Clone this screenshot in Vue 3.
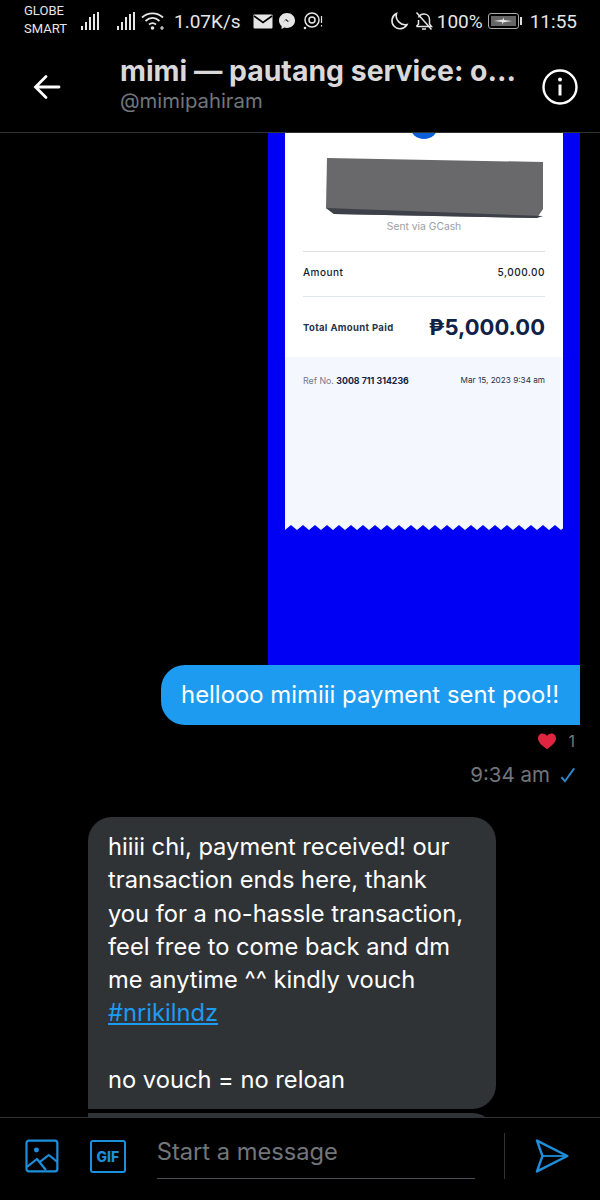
<template>
  <div class="screen">
    <div class="top">
      <div class="status">
        <div class="carrier">GLOBE<br>SMART</div>
        <svg class="bars" width="20" height="20" viewBox="0 0 20 20">
          <rect v-for="b in bars" :key="b.x" :x="b.x" :y="b.y" width="2" :height="19 - b.y" fill="#e6e6e6" />
        </svg>
        <svg class="bars second" width="20" height="20" viewBox="0 0 20 20">
          <rect v-for="b in bars" :key="b.x" :x="b.x" :y="b.y" width="2" :height="19 - b.y" fill="#e6e6e6" />
        </svg>
        <svg class="wifi" width="24" height="20" viewBox="0 0 24 20" fill="none" stroke="#e6e6e6" stroke-width="1.7">
          <path d="M1 6.500C7 1 16 1 22 6.500" />
          <path d="M4.500 10C9 6 14 6 18.500 10" />
          <path d="M8 13.500C10 11.800 13 11.800 15 13.500" />
          <circle cx="11.500" cy="17" r="1.800" fill="#e6e6e6" stroke="none" />
          <path d="M19 17h4M21 15v4" stroke-width="1.200" />
        </svg>
        <span class="speed">1.07K/s</span>
        <svg class="mail" width="20" height="15" viewBox="0 0 20 15">
          <rect width="19" height="14" x="0.500" y="0.500" fill="#e6e6e6" rx="1" />
          <path d="M1 2l9 6.500L19 2" fill="none" stroke="#000" stroke-width="1.600" />
        </svg>
        <svg class="messenger" width="18" height="18" viewBox="0 0 18 18">
          <path d="M9 1C4.500 1 1 4.200 1 8.500c0 2.300 1 4.200 2.600 5.500v3l2.700-1.500c.8.300 1.700.4 2.700.4 4.500 0 8-3.200 8-7.400S13.500 1 9 1z" fill="#e6e6e6" />
          <path d="M4.500 11L8 7l2.500 2.200L13.500 6 10 10 7.500 8z" fill="#000" />
        </svg>
        <svg class="ring" width="20" height="20" viewBox="0 0 20 20" fill="none" stroke="#e6e6e6">
          <circle cx="9" cy="9" r="7" stroke-width="1.500" />
          <circle cx="9" cy="9" r="3" stroke-width="1.500" />
          <circle cx="2" cy="17" r="1.300" fill="#e6e6e6" stroke="none" />
          <path d="M18.500 5v7M18.500 14v1.500" stroke-width="1.200" />
        </svg>
        <div class="status-right">
          <svg width="20" height="20" viewBox="0 0 20 20" fill="none" stroke="#e6e6e6" stroke-width="1.600">
            <path d="M7.500 2.500A8 8 0 1 0 18 13.500 9 9 0 0 1 7.500 2.500z" />
          </svg>
          <svg class="mute" width="18" height="20" viewBox="0 0 18 20" fill="none" stroke="#e6e6e6" stroke-width="1.500">
            <path d="M1.500 15.500h15l-2-2.500V8.500C14.500 5 12 3 9 3S4.500 4 3.500 6.500" />
            <path d="M3.500 9v4l-2 2.500M7 18h4M1.500 1.500l15 17" />
          </svg>
          <span class="pct">100%</span>
          <div class="battery">
            <div class="charge">
              <svg width="20" height="8" viewBox="0 0 20 8"><path d="M1 4l9-1.500L11 0v3l8 1-9 1.500L9 8V5z" fill="#e6e6e6" /></svg>
            </div>
          </div>
          <div class="nub"></div>
          <span class="clock">11:55</span>
        </div>
      </div>
      <div class="header">
        <svg class="back" width="28" height="28" viewBox="0 0 28 28" fill="none" stroke="#fff" stroke-width="2.800" stroke-linecap="round">
          <path d="M26 14H3M13 3.500L2.500 14 13 24.500" />
        </svg>
        <div class="names">
          <div class="name">mimi — pautang service: o...</div>
          <div class="handle">@mimipahiram</div>
        </div>
        <svg class="info" width="36" height="36" viewBox="0 0 36 36" fill="none" stroke="#fff">
          <circle cx="18" cy="18" r="16.500" stroke-width="2.400" />
          <circle cx="18" cy="10.500" r="2" fill="#fff" stroke="none" />
          <path d="M18 15.500v11" stroke-width="3" />
        </svg>
      </div>
    </div>

    <div class="chat">
      <div class="photo">
        <div class="receipt">
          <div class="dot"></div>
          <div class="card">
            <svg class="redact" width="218" height="62" viewBox="0 0 218 62">
              <path d="M1 1L217 5V52L211 61L8 57L0 51z" fill="#69696b" />
              <path d="M0 51L217 59L211 61L8 57z" fill="#3d4048" />
            </svg>
            <div class="via">Sent via GCash</div>
            <div class="amount-row">
              <span>Amount</span>
              <span>5,000.00</span>
            </div>
            <div class="total-row">
              <span class="total-label">Total Amount Paid</span>
              <span class="total">₱5,000.00</span>
            </div>
          </div>
          <div class="foot">
            <span class="ref">Ref No. <b>3008 711 314236</b></span>
            <span class="date">Mar 15, 2023 9:34 am</span>
          </div>
          <svg class="zigzag" width="278" height="5" viewBox="0 0 278 5">
            <defs>
              <pattern id="teeth" width="12" height="5" patternUnits="userSpaceOnUse">
                <path d="M0 0H12V5L6 0L0 5z" fill="#f4f8fe" />
              </pattern>
            </defs>
            <rect width="278" height="5" fill="url(#teeth)" />
          </svg>
        </div>
      </div>
      <div class="sent">hellooo mimiii payment sent poo!!</div>
      <div class="react">
        <svg width="18" height="17" viewBox="0 0 20 18">
          <path d="M10 17.500C3 12.500 0 9 0 5.300 0 2.300 2.300 0 5.200 0 7.200 0 9 1 10 2.800 11 1 12.800 0 14.800 0 17.700 0 20 2.300 20 5.300 20 9 17 12.500 10 17.500z" fill="#e2253f" />
        </svg>
        <span>1</span>
      </div>
      <div class="meta">
        <span>9:34 am</span>
        <svg width="18" height="18" viewBox="0 0 18 18" fill="none" stroke="#2b88c9" stroke-width="2.200">
          <path d="M1.500 11.500L5.500 16 16 1.500" />
        </svg>
      </div>
      <div class="bubble">hiiii chi, payment received! our transaction ends here, thank you for a no-hassle transaction, feel free to come back and dm me anytime ^^ kindly vouch <a class="tag">#nrikilndz</a><br><br>no vouch = no reloan</div>
      <div class="bubble next"></div>
    </div>

    <div class="composer">
      <svg width="34" height="34" viewBox="0 0 34 34" fill="none" stroke="#1d8fdc" stroke-width="2.200" stroke-linejoin="round">
        <rect x="1.500" y="1.500" width="31" height="31" rx="2.500" />
        <circle cx="11.500" cy="11" r="2.500" fill="#1d8fdc" stroke="none" />
        <path d="M2 28l10-8 9 11M15 23l9-7 8.500 7" />
      </svg>
      <div class="gif"><span>GIF</span></div>
      <div class="input">Start a message</div>
      <div class="rule"></div>
      <svg width="34" height="34" viewBox="0 0 34 34" fill="none" stroke="#1d8fdc" stroke-width="2.400" stroke-linejoin="round">
        <path d="M2 1.500L32.500 17 2 32.500 7.500 17z" />
        <path d="M7.500 17H32" stroke-width="1.800" />
      </svg>
    </div>
  </div>
</template>

<script setup>
// five signal bars rising left to right
const bars = [
  { x: 1, y: 15 },
  { x: 5, y: 11 },
  { x: 9, y: 6 },
  { x: 13, y: 3 },
  { x: 17, y: 1 },
]
</script>

<style scoped>
.screen {
  display: flex;
  flex-direction: column;
  width: 600px;
  height: 1200px;
  overflow: hidden;
  background: #000;
  font-family: Inter, "Liberation Sans", sans-serif;
}

.top {
  flex: none;
  height: 133px;
  border-bottom: 1px solid #2f3336;
  box-sizing: border-box;
}

.status {
  display: flex;
  align-items: center;
  height: 42px;
  padding: 0 23px 0 24px;
  color: #e6e6e6;
  font-family: Roboto, "Liberation Sans", sans-serif;
}

.carrier {
  width: 56px;
  font-size: 13px;
  line-height: 18px;
  margin-top: -2px;
}

.bars.second {
  margin-left: 16px;
}

.wifi {
  margin-left: 5px;
}

.speed {
  margin-left: 9px;
  font-size: 19px;
}

.mail {
  margin-left: 12px;
}

.messenger {
  margin-left: 5px;
}

.ring {
  margin-left: 7px;
}

.status-right {
  display: flex;
  align-items: center;
  margin-left: auto;
}

.mute {
  margin-left: 6px;
}

.pct {
  margin-left: 4px;
  font-size: 19px;
}

.battery {
  width: 31px;
  height: 16px;
  margin-left: 5px;
  padding: 2px;
  border: 1px solid #aaa;
  border-radius: 3px;
  box-sizing: border-box;
}

.charge {
  display: flex;
  align-items: center;
  justify-content: center;
  height: 100%;
  background: #666;
}

.nub {
  width: 2px;
  height: 8px;
  margin-left: 1px;
  background: #ddd;
}

.clock {
  margin-left: 8px;
  font-size: 19px;
}

.header {
  display: flex;
  align-items: center;
  height: 90px;
  padding: 0 22px 0 33px;
}

.back {
  flex: none;
}

.names {
  flex: 1;
  margin-left: 59px;
  margin-top: -6px;
}

.name {
  color: #d9d9d9;
  font-size: 28.400px;
  font-weight: 700;
  line-height: 34px;
  white-space: nowrap;
}

.handle {
  color: #71767b;
  font-size: 20.300px;
  line-height: 26px;
}

.chat {
  flex: 1;
  min-height: 0;
  overflow: hidden;
  display: flex;
  flex-direction: column;
}

.photo {
  flex: none;
  align-self: flex-end;
  width: 312px;
  height: 532px;
  margin-right: 20px;
  padding: 0 17px;
  box-sizing: border-box;
  background: #0000f5;
}

.receipt {
  position: relative;
  width: 278px;
}

.dot {
  position: absolute;
  top: -20px;
  left: 125px;
  width: 28px;
  height: 26px;
  border-radius: 50%;
  background: #0a5ed8;
}

.card {
  display: flex;
  flex-direction: column;
  height: 224px;
  padding: 24px 18px 0;
  background: #fff;
  color: #10203c;
  font-size: 10px;
  box-sizing: border-box;
}

.redact {
  flex: none;
  margin-left: 23px;
}

.via {
  margin-top: 1px;
  color: #9a9ea6;
  font-size: 10.300px;
  text-align: center;
}

.amount-row {
  display: flex;
  justify-content: space-between;
  align-items: center;
  height: 46px;
  margin-top: 19px;
  padding-bottom: 5px;
  box-sizing: border-box;
  border-top: 1px solid #dde0e3;
  border-bottom: 1px solid #dde8ea;
  color: #111c2e;
  font-weight: 500;
  letter-spacing: 0.5px;
}

.total-row {
  display: flex;
  justify-content: space-between;
  align-items: center;
  height: 60px;
  font-weight: 700;
}

.total-label {
  color: #24344c;
  font-size: 9.500px;
  letter-spacing: 0.35px;
}

.total {
  font-size: 22px;
  font-weight: 700;
  color: #0f2145;
}

.foot {
  display: flex;
  justify-content: space-between;
  align-items: flex-start;
  height: 168px;
  padding: 18px 18px 0;
  background: #f4f8fe;
  box-sizing: border-box;
  font-size: 8.200px;
  color: #1f2f4a;
}

.ref {
  color: #6f7a8c;
  font-size: 8.800px;
}

.ref b {
  color: #12223f;
}

.zigzag {
  display: block;
}

.sent {
  flex: none;
  align-self: flex-end;
  width: 419px;
  height: 60px;
  margin-right: 20px;
  padding-left: 20px;
  box-sizing: border-box;
  border-radius: 24px 0 0 24px;
  background: #1d9bf0;
  color: #fff;
  font-size: 23.900px;
  line-height: 59px;
  white-space: nowrap;
}

.react {
  display: flex;
  justify-content: flex-end;
  align-items: center;
  gap: 10px;
  height: 18px;
  margin: 7px 25px 0 0;
  color: #71767b;
  font-size: 16px;
}

.react svg {
  margin-right: 2px;
}

.meta {
  display: flex;
  justify-content: flex-end;
  align-items: center;
  gap: 10px;
  margin: 13px 24px 0 0;
  color: #71767b;
  font-size: 20.500px;
  line-height: 24px;
}

.meta svg {
  width: 16px;
}

.bubble {
  flex: none;
  box-sizing: border-box;
  width: 408px;
  margin: 30px 0 0 88px;
  padding: 13px 26px 13px 20px;
  border-radius: 24px 24px 24px 0;
  background: #2f3336;
  color: #fff;
  font-size: 23.700px;
  line-height: 33.300px;
}

.bubble.next {
  height: 30px;
  margin-top: 4px;
  border-radius: 0 24px 0 0;
}

.tag {
  color: #1d9bf0;
  text-decoration: underline;
}

.composer {
  flex: none;
  display: flex;
  align-items: center;
  height: 83px;
  padding: 0 31px 6px 25px;
  border-top: 1px solid #2f3336;
  box-sizing: border-box;
}

.gif {
  display: flex;
  align-items: center;
  justify-content: center;
  width: 36px;
  height: 33px;
  margin-left: 31px;
  border: 2.200px solid #1d8fdc;
  border-radius: 3px;
  box-sizing: border-box;
  color: #1d8fdc;
  font-size: 14px;
  font-weight: 800;
}

.input {
  width: 320px;
  height: 46px;
  margin-left: 31px;
  border-bottom: 1px solid #4a4e52;
  box-sizing: border-box;
  color: #71767b;
  font-size: 23.700px;
  line-height: 38px;
}

.rule {
  width: 1px;
  height: 46px;
  margin: 0 30px 0 29px;
  background: #2f3336;
}
</style>

<style>
body {
  background: #000;
}
</style>
